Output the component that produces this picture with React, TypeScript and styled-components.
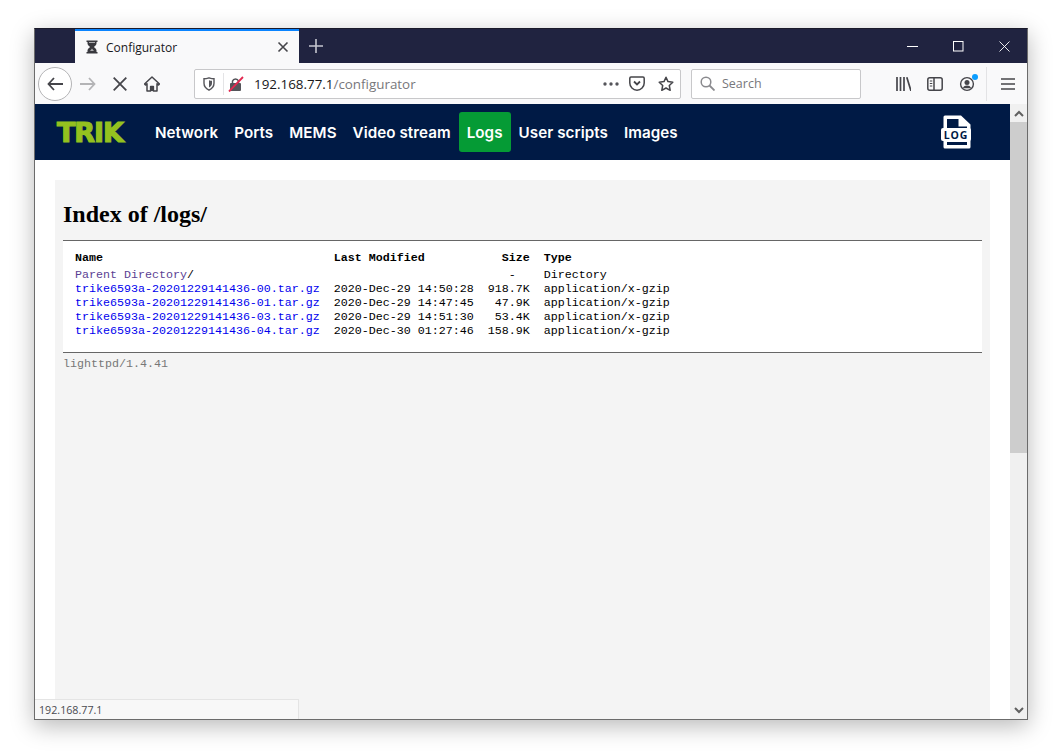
import React from 'react';
import styled, { createGlobalStyle } from 'styled-components';

const GlobalStyle = createGlobalStyle`
  html, body {
    margin: 0;
    padding: 0;
    background: #fff;
  }
`;

const Stage = styled.div`
  padding: 28px 0 0 34px;
  height: 751px;
  width: 1060px;
  box-sizing: border-box;
  overflow: hidden;
`;

const Window = styled.div`
  position: relative;
  width: 994px;
  height: 692px;
  box-sizing: border-box;
  border: 1px solid #6b6b6b;
  border-top-color: #1a1a2a;
  display: flex;
  flex-direction: column;
  background: #fff;
  box-shadow: 0 6px 22px rgba(0, 0, 0, 0.28);
  overflow: hidden;
  font-family: "Open Sans", "Noto Sans", sans-serif;
`;

const TitleBar = styled.div`
  height: 34px;
  flex: none;
  background: #202340;
  display: flex;
  padding-left: 40px;
`;

const Tab = styled.div`
  width: 224px;
  box-sizing: border-box;
  border-top: 2px solid #0a84ff;
  background: #f9f9fa;
  display: flex;
  align-items: center;
  padding: 0 10px 0 11px;
  color: #18181a;
  font-size: 12px;
`;

const TabTitle = styled.span`
  flex: 1;
  margin-left: 8px;
`;

const NewTab = styled.div`
  width: 34px;
  display: flex;
  align-items: center;
  justify-content: center;
`;

const Spacer = styled.div`
  flex: 1;
`;

const WinButton = styled.div`
  width: 46px;
  display: flex;
  align-items: center;
  justify-content: center;
`;

const Toolbar = styled.div`
  height: 41px;
  flex: none;
  box-sizing: border-box;
  background: #f9f9fa;
  display: flex;
  align-items: center;
  padding-left: 3px;
`;

const BackButton = styled.div`
  width: 32px;
  height: 32px;
  border: 1px solid #b4b4b6;
  border-radius: 50%;
  background: #fff;
  display: flex;
  align-items: center;
  justify-content: center;
`;

const ToolButton = styled.div`
  width: 32px;
  height: 32px;
  flex: none;
  display: flex;
  align-items: center;
  justify-content: center;
`;

const ShieldButton = styled(ToolButton)`
  width: 28px;
`;

const PocketButton = styled(ToolButton)`
  margin: 0 5px 0 2px;
`;

const UrlBar = styled.div`
  width: 487px;
  height: 30px;
  margin-left: 26px;
  box-sizing: border-box;
  border: 1px solid #c8c8ca;
  border-radius: 2px;
  background: #fff;
  display: flex;
  align-items: center;
  font-size: 13.4px;
`;

const UrlDivider = styled.div`
  width: 1px;
  height: 22px;
  background: #e4e4e6;
  margin: 0 4px 0 0;
`;

const UrlText = styled.span`
  flex: 1;
  margin-left: 10px;
  color: #18181a;
`;

const UrlPath = styled.span`
  color: #77777b;
`;

const SearchBar = styled.div`
  width: 170px;
  height: 30px;
  margin: 0 26px 0 10px;
  box-sizing: border-box;
  border: 1px solid #c8c8ca;
  border-radius: 2px;
  background: #fff;
  display: flex;
  align-items: center;
  gap: 7px;
  padding-left: 8px;
  color: #77777b;
  font-size: 12.5px;
`;

const ToolSeparator = styled.div`
  width: 1px;
  height: 34px;
  margin-left: 3px;
  background: #e3e3e5;
`;

const MenuButton = styled(ToolButton)`
  width: 39px;
  padding-left: 2px;
  box-sizing: border-box;
`;

const Viewport = styled.div`
  flex: 1;
  min-height: 0;
  display: flex;
`;

const Page = styled.div`
  flex: 1;
  min-width: 0;
  display: flex;
  flex-direction: column;
`;

const Nav = styled.nav`
  height: 56px;
  flex: none;
  background: #001a45;
  display: flex;
  align-items: center;
  padding: 0 21px 0 22px;
`;

const Logo = styled.span`
  width: 90px;
  font-family: "DejaVu Sans", sans-serif;
  font-weight: 700;
  font-size: 27px;
  letter-spacing: -1.1px;
  color: #94c11f;
  -webkit-text-stroke: 1.2px #94c11f;
`;

const NavItem = styled.a<{ $active?: boolean }>`
  height: 40px;
  display: flex;
  align-items: center;
  padding: 0 8px;
  border-radius: 3px;
  color: #fff;
  font-family: Inter, sans-serif;
  font-weight: 600;
  font-size: 15.2px;
  letter-spacing: 0.05px;
  background: ${({ $active }) => ($active ? '#059b35' : 'transparent')};
`;

const LogIcon = styled.svg`
  margin-left: auto;
  margin-right: 16px;
`;

const Content = styled.div`
  flex: 1;
  min-height: 0;
  padding: 20px 20px 0;
  overflow: hidden;
  display: flex;
`;

const Panel = styled.div`
  flex: 1;
  min-width: 0;
  background: #f4f4f4;
  padding: 0 8px;
`;

const Heading = styled.h2`
  margin: 0;
  padding: 19px 0 11px;
  font-family: "Liberation Serif", serif;
  font-weight: 700;
  font-size: 24px;
  line-height: 30px;
  color: #000;
`;

const Listing = styled.div`
  background: #fff;
  border-top: 1px solid #666;
  border-bottom: 1px solid #666;
  padding: 10px 12px 14px;
`;

const Table = styled.table`
  border-collapse: collapse;
  font-family: "Liberation Mono", monospace;
  font-size: 11.67px;
  line-height: 14px;
  color: #000;
`;

const HeadCell = styled.th<{ $right?: boolean }>`
  padding: 0 14px 3px 0;
  font-weight: 700;
  text-align: ${({ $right }) => ($right ? 'right' : 'left')};
`;

const Cell = styled.td<{ $right?: boolean }>`
  padding: 0 14px 0 0;
  white-space: pre;
  text-align: ${({ $right }) => ($right ? 'right' : 'left')};
`;

const FileLink = styled.a<{ $visited?: boolean }>`
  color: ${({ $visited }) => ($visited ? '#5b3f93' : '#0000ee')};
`;

const Footer = styled.div`
  font-family: "Liberation Mono", monospace;
  font-size: 11.67px;
  line-height: 14px;
  padding-top: 4px;
  color: #777;
`;

const Scrollbar = styled.div`
  width: 17px;
  flex: none;
  background: #f0f0f0;
  display: flex;
  flex-direction: column;
`;

const ScrollArrow = styled.div`
  height: 18px;
  flex: none;
  display: flex;
  align-items: center;
  justify-content: center;
`;

const ScrollTrack = styled.div`
  flex: 1;
`;

const ScrollThumb = styled.div`
  height: 331px;
  background: #cdcdcd;
`;

const StatusPanel = styled.div`
  position: absolute;
  left: 0;
  bottom: 0;
  width: 264px;
  height: 20px;
  box-sizing: border-box;
  background: #f8f8f8;
  border-top: 1px solid #e4e4e4;
  border-right: 1px solid #e4e4e4;
  padding-left: 4px;
  font-size: 10.7px;
  line-height: 20px;
  color: #4a4a50;
`;

const files = [
  { name: 'trike6593a-20201229141436-00.tar.gz', date: '2020-Dec-29 14:50:28', size: '918.7K' },
  { name: 'trike6593a-20201229141436-01.tar.gz', date: '2020-Dec-29 14:47:45', size: '47.9K' },
  { name: 'trike6593a-20201229141436-03.tar.gz', date: '2020-Dec-29 14:51:30', size: '53.4K' },
  { name: 'trike6593a-20201229141436-04.tar.gz', date: '2020-Dec-30 01:27:46', size: '158.9K' },
];

const navItems = ['Network', 'Ports', 'MEMS', 'Video stream', 'Logs', 'User scripts', 'Images'];

const App = () => (
  <Stage>
    <GlobalStyle />
    <Window>
      <TitleBar>
        <Tab>
          <svg width="12" height="14" viewBox="0 0 12 14">
            <path d="M0.500 0.500h11v1.500h-1v1.500c0 1.600-1.600 2.600-2.600 3.500 1 .9 2.600 1.900 2.600 3.500v1.500h1v1.500H.5V12h1v-1.500c0-1.600 1.600-2.600 2.600-3.500C3.100 6.100 1.500 5.100 1.500 3.500V2h-1z" fill="#38383d" />
            <path d="M3 2h6v1H3zM6 8.500l2 2.500H4z" fill="#f9f9fa" opacity="0.6" />
          </svg>
          <TabTitle>Configurator</TabTitle>
          <svg width="12" height="12" viewBox="0 0 12 12">
            <path d="M1.500 1.500l9 9M10.500 1.500l-9 9" stroke="#45454a" strokeWidth="1.600" />
          </svg>
        </Tab>
        <NewTab>
          <svg width="14" height="14" viewBox="0 0 14 14">
            <path d="M7 0v14M0 7h14" stroke="#c5c6cf" strokeWidth="1.600" />
          </svg>
        </NewTab>
        <Spacer />
        <WinButton>
          <svg width="11" height="11" viewBox="0 0 11 11">
            <path d="M0 5.500h11" stroke="#fff" strokeWidth="1" />
          </svg>
        </WinButton>
        <WinButton>
          <svg width="11" height="11" viewBox="0 0 11 11">
            <rect x="0.500" y="0.500" width="9.500" height="9.500" fill="none" stroke="#fff" strokeWidth="1" />
          </svg>
        </WinButton>
        <WinButton>
          <svg width="11" height="11" viewBox="0 0 11 11">
            <path d="M0.500 0.500l10 10M10.500 0.500l-10 10" stroke="#fff" strokeWidth="0.900" />
          </svg>
        </WinButton>
      </TitleBar>
      <Toolbar>
        <BackButton>
          <svg width="16" height="14" viewBox="0 0 16 14">
            <path d="M7 1L1.500 7 7 13M1.500 7H16" fill="none" stroke="#45454a" strokeWidth="1.800" />
          </svg>
        </BackButton>
        <ToolButton>
          <svg width="16" height="14" viewBox="0 0 16 14">
            <path d="M9 1l5.500 6L9 13M14.500 7H0" fill="none" stroke="#b4b4b6" strokeWidth="1.800" />
          </svg>
        </ToolButton>
        <ToolButton>
          <svg width="14" height="14" viewBox="0 0 14 14">
            <path d="M0.700 0.700l12.600 12.600M13.300 0.700L0.700 13.300" stroke="#45454a" strokeWidth="1.800" />
          </svg>
        </ToolButton>
        <ToolButton>
          <svg width="16" height="16" viewBox="0 0 16 16">
            <path d="M8 1L0.500 8l1 1L3 7.700V15h3.600v-4.500h2.800V15H13V7.700L14.500 9l1-1z" fill="none" stroke="#45454a" strokeWidth="1.500" strokeLinejoin="round" />
            <rect x="6.700" y="10.500" width="2.600" height="4.500" fill="#45454a" />
          </svg>
        </ToolButton>
        <UrlBar>
          <ShieldButton>
            <svg width="12" height="14" viewBox="0 0 12 14">
              <path d="M1 1.800C3 1.800 4.500 1.300 6 .8c1.500.5 3 1 5 1v4.500c0 3.300-2.300 5.500-5 6.800-2.700-1.300-5-3.500-5-6.800z" fill="none" stroke="#55555a" strokeWidth="1.400" />
              <path d="M6 3.200c1 .3 2 .6 3 .6v2.500c0 2-1.300 3.400-3 4.300z" fill="#55555a" />
            </svg>
          </ShieldButton>
          <UrlDivider />
          <svg width="16" height="16" viewBox="0 0 16 16">
            <rect x="2" y="7" width="11" height="8" rx="1" fill="#55555a" />
            <path d="M4.500 7V5a3.200 3.200 0 0 1 6 0v2" fill="none" stroke="#55555a" strokeWidth="1.500" />
            <path d="M1 15.500L15 1" stroke="#e22850" strokeWidth="1.800" />
          </svg>
          <UrlText>
            192.168.77.1<UrlPath>/configurator</UrlPath>
          </UrlText>
          <svg width="16" height="4" viewBox="0 0 16 4">
            <circle cx="2" cy="2" r="1.700" fill="#55555a" />
            <circle cx="8" cy="2" r="1.700" fill="#55555a" />
            <circle cx="14" cy="2" r="1.700" fill="#55555a" />
          </svg>
          <PocketButton>
            <svg width="16" height="15" viewBox="0 0 16 15">
              <path d="M2 1h12a1.200 1.200 0 0 1 1.200 1.200V7a7.200 7.200 0 0 1-14.400 0V2.200A1.200 1.200 0 0 1 2 1z" fill="none" stroke="#45454a" strokeWidth="1.500" />
              <path d="M5 5.500L8 8.500l3-3" fill="none" stroke="#45454a" strokeWidth="1.800" />
            </svg>
          </PocketButton>
          <svg width="16" height="16" viewBox="0 0 16 16" style={{ marginRight: 6 }}>
            <path d="M8 1.200l2 4.400 4.800.6-3.500 3.300.9 4.800L8 12l-4.200 2.300.9-4.800L1.200 6.200 6 5.600z" fill="none" stroke="#45454a" strokeWidth="1.500" strokeLinejoin="round" />
          </svg>
        </UrlBar>
        <SearchBar>
          <svg width="15" height="15" viewBox="0 0 15 15">
            <circle cx="6" cy="6" r="4.800" fill="none" stroke="#8a8a8e" strokeWidth="1.500" />
            <path d="M9.500 9.500L14.500 14.500" stroke="#8a8a8e" strokeWidth="1.800" />
          </svg>
          Search
        </SearchBar>
        <ToolButton>
          <svg width="16" height="14" viewBox="-1 0 16 14">
            <path d="M1 0v14M4.500 0v14M8 0v14M10.800 0.300L15 14" stroke="#45454a" strokeWidth="1.700" fill="none" />
          </svg>
        </ToolButton>
        <ToolButton>
          <svg width="16" height="14" viewBox="0 0 16 14">
            <rect x="0.800" y="0.800" width="14.400" height="12.400" rx="2" fill="none" stroke="#45454a" strokeWidth="1.500" />
            <path d="M7 1v12" stroke="#45454a" strokeWidth="1.500" />
            <path d="M2.800 4h2.500M2.800 6.500h2.500M2.800 9h2.500" stroke="#45454a" strokeWidth="1" />
          </svg>
        </ToolButton>
        <ToolButton>
          <svg width="20" height="20" viewBox="0 0 20 20" overflow="visible">
            <circle cx="10" cy="10" r="6.400" fill="none" stroke="#45454a" strokeWidth="1.400" />
            <circle cx="10" cy="8.500" r="2.500" fill="#45454a" />
            <path d="M5.800 14.200c.8-2 2.300-2.700 4.200-2.700s3.400.7 4.200 2.700z" fill="#45454a" />
            <circle cx="18" cy="3" r="3" fill="#0a9dff" />
          </svg>
        </ToolButton>
        <ToolSeparator />
        <MenuButton>
          <svg width="14" height="12" viewBox="0 0 14 12">
            <path d="M0 1h14M0 6h14M0 11h14" stroke="#45454a" strokeWidth="1.600" />
          </svg>
        </MenuButton>
      </Toolbar>
      <Viewport>
        <Page>
          <Nav>
            <Logo>TRIK</Logo>
            {navItems.map((item) => (
              <NavItem key={item} $active={item === 'Logs'}>
                {item}
              </NavItem>
            ))}
            <LogIcon width="32" height="36" viewBox="0 0 32 36">
              <path d="M4 1.500h16l9.500 9V33a1.500 1.500 0 0 1-1.500 1.500H4A1.500 1.500 0 0 1 2.500 33V3A1.500 1.500 0 0 1 4 1.500z" fill="#fff" />
              <path d="M6 5h11.500v7.500H26V14H6zM6 28h20v3H6z" fill="#001a45" />
              <rect x="0" y="14" width="30" height="13" rx="2" fill="#fff" />
              <text x="15" y="24.500" textAnchor="middle" fontFamily="'Open Sans', sans-serif" fontWeight="700" fontSize="10.500" letterSpacing="0.800" fill="#001a45">LOG</text>
            </LogIcon>
          </Nav>
          <Content>
            <Panel>
              <Heading>Index of /logs/</Heading>
              <Listing>
                <Table>
                  <thead>
                    <tr>
                      <HeadCell>Name</HeadCell>
                      <HeadCell>Last Modified</HeadCell>
                      <HeadCell $right>Size</HeadCell>
                      <HeadCell>Type</HeadCell>
                    </tr>
                  </thead>
                  <tbody>
                    <tr>
                      <Cell>
                        <FileLink $visited>Parent Directory</FileLink>/
                      </Cell>
                      <Cell />
                      <Cell $right>-&nbsp;&nbsp;</Cell>
                      <Cell>Directory</Cell>
                    </tr>
                    {files.map((file) => (
                      <tr key={file.name}>
                        <Cell>
                          <FileLink>{file.name}</FileLink>
                        </Cell>
                        <Cell>{file.date}</Cell>
                        <Cell $right>{file.size}</Cell>
                        <Cell>application/x-gzip</Cell>
                      </tr>
                    ))}
                  </tbody>
                </Table>
              </Listing>
              <Footer>lighttpd/1.4.41</Footer>
            </Panel>
          </Content>
        </Page>
        <Scrollbar>
          <ScrollArrow>
            <svg width="10" height="7" viewBox="0 0 10 7">
              <path d="M1 6l4-4 4 4" fill="none" stroke="#606060" strokeWidth="2" />
            </svg>
          </ScrollArrow>
          <ScrollThumb />
          <ScrollTrack />
          <ScrollArrow>
            <svg width="10" height="7" viewBox="0 0 10 7">
              <path d="M1 1l4 4 4-4" fill="none" stroke="#606060" strokeWidth="2" />
            </svg>
          </ScrollArrow>
        </Scrollbar>
      </Viewport>
      <StatusPanel>192.168.77.1</StatusPanel>
    </Window>
  </Stage>
);

export default App;
